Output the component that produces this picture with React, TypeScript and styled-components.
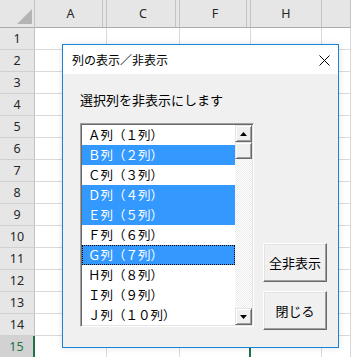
import { Fragment } from 'react'
import styled, { createGlobalStyle } from 'styled-components'

const GlobalStyle = createGlobalStyle`
  html, body {
    margin: 0;
    padding: 0;
    overflow: hidden;
    background: #fff;
  }
  * { box-sizing: border-box; }
`

const jp = `"Noto Sans CJK JP", "Noto Sans", sans-serif`

const Page = styled.div`
  position: relative;
  width: 351px;
  height: 357px;
  overflow: hidden;
`

const Sheet = styled.div`
  display: grid;
  grid-template-columns: 35px 72px 73px 71px 71px 1fr;
  grid-template-rows: 28px;
  grid-auto-rows: 22px;
  font-family: "Noto Sans", sans-serif;
  font-size: 12.5px;
  color: #262626;
`

const Corner = styled.div`
  background: #e6e6e6;
  border-right: 1px solid #c3c3c3;
  border-bottom: 1px solid #ababab;
  display: flex;
  align-items: flex-end;
  justify-content: flex-end;
  padding: 0 2px 3px 0;
`

const ColHeader = styled.div<{ $hiddenAfter?: boolean }>`
  position: relative;
  background: #e6e6e6;
  border-right: 1px solid #c3c3c3;
  border-bottom: 1px solid #ababab;
  display: flex;
  align-items: center;
  justify-content: center;
  &::after {
    content: '';
    display: ${p => (p.$hiddenAfter ? 'block' : 'none')};
    position: absolute;
    top: 0;
    bottom: 0;
    right: 3px;
    width: 1px;
    background: #c3c3c3;
  }
`

const RowHeader = styled.div<{ $active?: boolean }>`
  background: ${p => (p.$active ? '#d2d2d2' : '#e6e6e6')};
  color: ${p => (p.$active ? '#217346' : '#262626')};
  border-bottom: 1px solid #d0d0d0;
  border-right: ${p => (p.$active ? '2px solid #217346' : '1px solid #c3c3c3')};
  display: flex;
  align-items: center;
  justify-content: center;
`

const Cell = styled.div<{ $activeEdge?: boolean }>`
  background: #fff;
  border-right: ${p => (p.$activeEdge ? '2px solid #217346' : '1px solid #d9d9d9')};
  border-bottom: 1px solid #d9d9d9;
`

const Dialog = styled.div`
  position: absolute;
  left: 62px;
  top: 44px;
  width: 277px;
  height: 304px;
  border: 1px solid #1883d7;
  background: #f0f0f0;
  display: flex;
  flex-direction: column;
  box-shadow: 0 0 6px rgba(0, 0, 0, 0.12);
  font-family: ${jp};
  color: #000;
`

const TitleBar = styled.div`
  height: 29px;
  background: #fff;
  display: flex;
  align-items: center;
  padding-left: 9px;
`

const Title = styled.span`
  flex: 1;
  font-size: 12px;
  line-height: 16px;
`

const CloseButton = styled.div`
  width: 28px;
  height: 29px;
  display: flex;
  align-items: center;
  justify-content: center;
  padding-top: 1px;
`

const Body = styled.div`
  flex: 1;
  padding: 18px 0 0 17px;
`

const Prompt = styled.div`
  font-size: 13px;
  line-height: 16px;
  margin-bottom: 15px;
`

const Content = styled.div`
  display: flex;
  align-items: flex-start;
  gap: 9px;
`

const ListBox = styled.div`
  width: 174px;
  height: 204px;
  display: flex;
  border: 1px solid;
  border-color: #a0a0a0 #fff #fff #a0a0a0;
  box-shadow: inset 1px 1px #696969, inset -1px -1px #e3e3e3;
  padding: 1px;
  background: #fff;
`

const Items = styled.div`
  flex: 1;
  display: flex;
  flex-direction: column;
`

const Item = styled.div<{ $selected?: boolean; $focused?: boolean }>`
  height: 20px;
  line-height: 20px;
  padding-left: 6px;
  font-size: 12.5px;
  white-space: nowrap;
  background: ${p => (p.$selected ? '#3399ff' : '#fff')};
  color: ${p => (p.$selected ? '#fff' : '#000')};
  outline: ${p => (p.$focused ? '1px dotted #000' : 'none')};
  outline-offset: -1px;
`

const ScrollBar = styled.div`
  width: 17px;
  display: flex;
  flex-direction: column;
`

const ScrollButton = styled.div`
  height: 17px;
  background: #f0f0f0;
  border: 1px solid;
  border-color: #e3e3e3 #696969 #696969 #e3e3e3;
  box-shadow: inset 1px 1px #fff, inset -1px -1px #a0a0a0;
  display: flex;
  align-items: center;
  justify-content: center;
`

const Track = styled.div`
  flex: 1;
  background: repeating-conic-gradient(#fff 0 25%, #ececec 0 50%) 0 0 / 2px 2px;
`

const ButtonColumn = styled.div`
  display: flex;
  flex-direction: column;
  gap: 9px;
  padding-top: 120px;
`

const PushButton = styled.button`
  width: 64px;
  height: 39px;
  padding: 0;
  background: #f0f0f0;
  border: 1px solid;
  border-color: #fff #696969 #696969 #fff;
  box-shadow: inset -1px -1px #a0a0a0, inset 1px 1px #e3e3e3;
  font-family: ${jp};
  font-size: 13px;
  color: #000;
`

const columns = [
  { label: 'A', hiddenAfter: true },
  { label: 'C', hiddenAfter: true },
  { label: 'F', hiddenAfter: true },
  { label: 'H', hiddenAfter: false },
  { label: '', hiddenAfter: false },
]

const items = [
  { text: 'Ａ列（１列）' },
  { text: 'Ｂ列（２列）', selected: true },
  { text: 'Ｃ列（３列）' },
  { text: 'Ｄ列（４列）', selected: true },
  { text: 'Ｅ列（５列）', selected: true },
  { text: 'Ｆ列（６列）' },
  { text: 'Ｇ列（７列）', selected: true, focused: true },
  { text: 'Ｈ列（８列）' },
  { text: 'Ｉ列（９列）' },
  { text: 'Ｊ列（１０列）' },
]

const rows = Array.from({ length: 15 }, (_, i) => i + 1)

export default function App() {
  return (
    <Page>
      <GlobalStyle />
      <Sheet>
        <Corner>
          <svg width="15" height="15" viewBox="0 0 15 15">
            <polygon points="15,0 15,15 0,15" fill="#b4b4b4" />
          </svg>
        </Corner>
        {columns.map((c, i) => (
          <ColHeader key={i} $hiddenAfter={c.hiddenAfter}>
            {c.label}
          </ColHeader>
        ))}
        {rows.map(r => (
          <Fragment key={r}>
            <RowHeader $active={r === 15}>{r}</RowHeader>
            {columns.map((_, i) => (
              <Cell key={i} $activeEdge={r === 15 && i === 2} />
            ))}
          </Fragment>
        ))}
      </Sheet>

      <Dialog>
        <TitleBar>
          <Title>列の表示／非表示</Title>
          <CloseButton>
            <svg width="11" height="11" viewBox="0 0 11 11">
              <path d="M0.5 0.5 L10.5 10.5 M10.5 0.5 L0.5 10.5" stroke="#000" strokeWidth="1" />
            </svg>
          </CloseButton>
        </TitleBar>
        <Body>
          <Prompt>選択列を非表示にします</Prompt>
          <Content>
            <ListBox>
              <Items>
                {items.map(it => (
                  <Item key={it.text} $selected={it.selected} $focused={it.focused}>
                    {it.text}
                  </Item>
                ))}
              </Items>
              <ScrollBar>
                <ScrollButton>
                  <svg width="7" height="4" viewBox="0 0 7 4">
                    <polygon points="3.5,0 7,4 0,4" fill="#000" />
                  </svg>
                </ScrollButton>
                <ScrollButton />
                <Track />
                <ScrollButton>
                  <svg width="7" height="4" viewBox="0 0 7 4">
                    <polygon points="0,0 7,0 3.5,4" fill="#000" />
                  </svg>
                </ScrollButton>
              </ScrollBar>
            </ListBox>
            <ButtonColumn>
              <PushButton>全非表示</PushButton>
              <PushButton>閉じる</PushButton>
            </ButtonColumn>
          </Content>
        </Body>
      </Dialog>
    </Page>
  )
}
